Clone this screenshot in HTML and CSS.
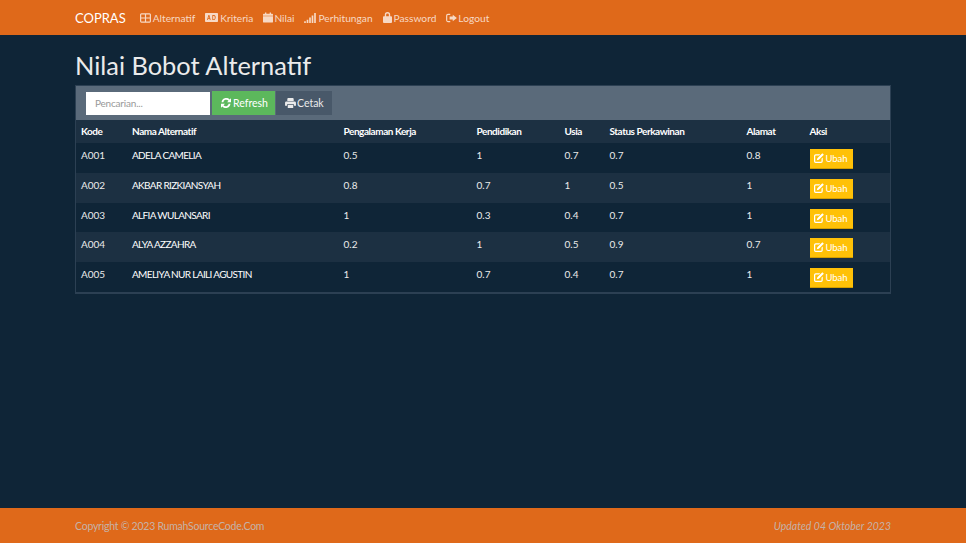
FILE: index.html
```html
<!DOCTYPE html>
<html lang="en">
<head>
    <meta charset="UTF-8">
    <title>Nilai Bobot Alternatif</title>
    <link rel="stylesheet" href="styles.css">
</head>
<body>
    <svg class="defs" width="0" height="0">
        <symbol id="i-table" viewBox="0 0 14 12"><path fill="none" stroke="currentColor" stroke-width="1.500" d="M1.800.8h10.400a1 1 0 0 1 1 1v8.400a1 1 0 0 1-1 1H1.800a1 1 0 0 1-1-1V1.800a1 1 0 0 1 1-1zM7 .8v10.400M.8 6h12.400"/></symbol>
        <symbol id="i-card" viewBox="0 0 16 11"><path fill="currentColor" fill-rule="evenodd" d="M1 0h14a1 1 0 0 1 1 1v9a1 1 0 0 1-1 1H1a1 1 0 0 1-1-1V1a1 1 0 0 1 1-1zm1.500 8.500h1l.4-1.200h1.700l.4 1.200h1L5.400 2.500H4.200zm1.700-2.100l.6-2 .6 2zM9 2.500v6h2.200c2.600 0 2.600-6 0-6zm1 1h1.100c1.300 0 1.300 4 0 4H10z"/></symbol>
        <symbol id="i-cal" viewBox="0 0 12 12"><path fill="currentColor" d="M2.400 0h1.600v1.500H8V0h1.600v1.500H11a1 1 0 0 1 1 1v1.300H0V2.500a1 1 0 0 1 1-1h1.400zM0 4.600h12V11a1 1 0 0 1-1 1H1a1 1 0 0 1-1-1z"/></symbol>
        <symbol id="i-signal" viewBox="0 0 14 12"><path fill="currentColor" d="M0 10h2v2H0zM3 8h2v4H3zM6 5.500h2V12H6zM9 3h2v9H9zM12 0h2v12h-2z"/></symbol>
        <symbol id="i-lock" viewBox="0 0 10 12"><path fill="currentColor" fill-rule="evenodd" d="M2 4.500V3a3 3 0 0 1 6 0v1.500h1a1 1 0 0 1 1 1V11a1 1 0 0 1-1 1H1a1 1 0 0 1-1-1V5.500a1 1 0 0 1 1-1zm1.500 0h3V3a1.500 1.500 0 0 0-3 0z"/></symbol>
        <symbol id="i-out" viewBox="0 0 13 12"><path fill="currentColor" d="M2.200 1H5v1.400H2.400a1 1 0 0 0-1 1v5.200a1 1 0 0 0 1 1H5V11H2.200A2.200 2.200 0 0 1 0 8.800V3.200A2.200 2.200 0 0 1 2.200 1zM8 2l5 4-5 4V7.700H4.200V4.300H8z"/></symbol>
        <symbol id="i-refresh" viewBox="0 0 12 12"><path fill="currentColor" d="M12 .3v4.800H7.200l1.800-1.800A3.500 3.500 0 0 0 2.800 5H.7A5.500 5.500 0 0 1 10.400 1.900zM0 11.700V6.900h4.800L3 8.700A3.500 3.500 0 0 0 9.200 7h2.100a5.500 5.500 0 0 1-9.700 3.100z"/></symbol>
        <symbol id="i-print" viewBox="0 0 12 11"><path fill="currentColor" fill-rule="evenodd" d="M3.200 0h5.600l.7.700V3.200h-7V.700zM1.500 3.800h9A1.500 1.500 0 0 1 12 5.300V8.500H9.800V7H2.200v1.500H0V5.300a1.500 1.500 0 0 1 1.500-1.500zM3 7.800h6V11H3z"/></symbol>
        <symbol id="i-edit" viewBox="0 0 12 12"><path fill="currentColor" d="M2 1.500h5.500L6 3H2.200a.7.7 0 0 0-.7.700v6.100c0 .4.300.7.700.7h6.100c.4 0 .7-.3.700-.7V7l1.500-1.500V10a2 2 0 0 1-2 2H2a2 2 0 0 1-2-2V3.500a2 2 0 0 1 2-2zM10 .2l1.800 1.800-6 6-2.500.7.700-2.500z"/></symbol>
    </svg>

    <nav class="navbar">
        <a class="brand">COPRAS</a>
        <ul class="nav">
            <li><svg class="icon ic-table"><use href="#i-table"/></svg>Alternatif</li>
            <li><svg class="icon ic-card"><use href="#i-card"/></svg>Kriteria</li>
            <li><svg class="icon ic-cal"><use href="#i-cal"/></svg>Nilai</li>
            <li><svg class="icon ic-signal"><use href="#i-signal"/></svg>Perhitungan</li>
            <li><svg class="icon ic-lock"><use href="#i-lock"/></svg>Password</li>
            <li><svg class="icon ic-out"><use href="#i-out"/></svg>Logout</li>
        </ul>
    </nav>

    <main class="container">
        <h1>Nilai Bobot Alternatif</h1>
        <div class="panel">
            <div class="panel-heading">
                <input class="search" type="text" placeholder="Pencarian...">
                <button class="btn btn-success"><svg class="icon ic-btn"><use href="#i-refresh"/></svg>Refresh</button>
                <button class="btn btn-default"><svg class="icon ic-print"><use href="#i-print"/></svg>Cetak</button>
            </div>
            <table class="table">
                <thead>
                    <tr>
                        <th class="col-kode">Kode</th>
                        <th class="col-nama">Nama Alternatif</th>
                        <th class="col-kerja">Pengalaman Kerja</th>
                        <th class="col-didik">Pendidikan</th>
                        <th class="col-usia">Usia</th>
                        <th class="col-status">Status Perkawinan</th>
                        <th class="col-alamat">Alamat</th>
                        <th>Aksi</th>
                    </tr>
                </thead>
                <tbody>
                    <tr>
                        <td>A001</td><td class="name">ADELA CAMELIA</td><td>0.5</td><td>1</td><td>0.7</td><td>0.7</td><td>0.8</td>
                        <td><a class="btn-ubah"><svg class="icon ic-edit"><use href="#i-edit"/></svg>Ubah</a></td>
                    </tr>
                    <tr>
                        <td>A002</td><td class="name">AKBAR RIZKIANSYAH</td><td>0.8</td><td>0.7</td><td>1</td><td>0.5</td><td>1</td>
                        <td><a class="btn-ubah"><svg class="icon ic-edit"><use href="#i-edit"/></svg>Ubah</a></td>
                    </tr>
                    <tr>
                        <td>A003</td><td class="name">ALFIA WULANSARI</td><td>1</td><td>0.3</td><td>0.4</td><td>0.7</td><td>1</td>
                        <td><a class="btn-ubah"><svg class="icon ic-edit"><use href="#i-edit"/></svg>Ubah</a></td>
                    </tr>
                    <tr>
                        <td>A004</td><td class="name">ALYA AZZAHRA</td><td>0.2</td><td>1</td><td>0.5</td><td>0.9</td><td>0.7</td>
                        <td><a class="btn-ubah"><svg class="icon ic-edit"><use href="#i-edit"/></svg>Ubah</a></td>
                    </tr>
                    <tr>
                        <td>A005</td><td class="name">AMELIYA NUR LAILI AGUSTIN</td><td>1</td><td>0.7</td><td>0.4</td><td>0.7</td><td>1</td>
                        <td><a class="btn-ubah"><svg class="icon ic-edit"><use href="#i-edit"/></svg>Ubah</a></td>
                    </tr>
                </tbody>
            </table>
        </div>
    </main>

    <footer class="footer">
        <span class="copyright">Copyright &copy; 2023 RumahSourceCode.Com</span>
        <em>Updated 04 Oktober 2023</em>
    </footer>
</body>
</html>
```

FILE: styles.css
```css
* {
    box-sizing: border-box;
}

body {
    margin: 0;
    display: flex;
    flex-direction: column;
    height: 543px;
    overflow: hidden;
    font-family: Lato, "Noto Sans", sans-serif;
    font-size: 10px;
    color: #ebebeb;
    background: #0f2537;
}

.defs {
    position: absolute;
}

.icon {
    display: inline-block;
    vertical-align: -1px;
    margin-right: 1px;
}

.ic-table { width: 11px; height: 10px; margin-right: 2px; }
.ic-card { width: 13px; height: 9px; margin-right: 2px; vertical-align: 0; }
.ic-cal { width: 10px; height: 11px; }
.ic-signal { width: 12px; height: 10px; margin-right: 2px; }
.ic-lock { width: 9px; height: 11px; margin-right: 2px; }
.ic-out { width: 11px; height: 10px; }
.ic-btn { width: 10px; height: 10px; margin-right: 2px; }
.ic-print { width: 11px; height: 10px; margin-right: 1px; vertical-align: -1px; }
.ic-edit { width: 10px; height: 10px; }

.navbar {
    display: flex;
    align-items: center;
    flex: none;
    height: 35px;
    padding-left: 75px;
    background: #df691a;
}

.brand {
    font-size: 13px;
    color: #fff;
    margin-right: 14px;
}

.nav {
    display: flex;
    gap: 10px;
    margin: 0;
    padding: 0;
    list-style: none;
    font-size: 10.2px;
    color: rgba(255, 255, 255, 0.75);
}

.container {
    flex: 1;
    padding: 0 75px;
}

h1 {
    margin: 16px 0 5px;
    font-size: 25.4px;
    font-weight: 400;
    line-height: 29px;
    color: #ebebeb;
}

.panel {
    border: 1px solid #2c4053;
    border-bottom-width: 2px;
    background: #0f2537;
}

.panel-heading {
    display: flex;
    align-items: center;
    gap: 2px;
    height: 34px;
    padding-left: 10px;
    background: #5a6a7a;
}

.search {
    width: 124px;
    height: 23px;
    padding: 0 9px;
    border: 0;
    font: 10px Lato, sans-serif;
    letter-spacing: -0.2px;
    background: #fff;
}

.search::placeholder {
    color: #999;
}

.btn {
    height: 24px;
    padding: 0 7px 0 9px;
    border: 0;
    font: 10.5px Lato, sans-serif;
    color: #fff;
}

.btn-success {
    background: #5cb85c;
}

.btn-default {
    margin-left: -1px;
    padding-right: 8px;
    background: #485869;
    color: #ebebeb;
}

.table {
    width: 100%;
    border-collapse: collapse;
    table-layout: fixed;
}

th {
    height: 23px;
    padding: 0 5px 2px;
    text-align: left;
    font-weight: 700;
    letter-spacing: -0.45px;
    color: #fff;
    background: #1c3042;
}

td {
    height: 29.8px;
    padding: 6px 5px 0;
    vertical-align: top;
    line-height: 12px;
}

td.name {
    letter-spacing: -0.65px;
    color: #fff;
}

tbody tr:nth-child(even) td {
    background: #1c3042;
}

.col-kode { width: 51px; }
.col-nama { width: 211.5px; }
.col-kerja { width: 133px; }
.col-didik { width: 88px; }
.col-usia { width: 45px; }
.col-status { width: 137px; }
.col-alamat { width: 63px; }

.btn-ubah {
    display: inline-block;
    height: 20px;
    width: 43px;
    line-height: 19px;
    text-align: center;
    font-size: 9.5px;
    color: #fff;
    background: #ffc107;
    border-bottom: 1px solid #d39e00;
}

.footer {
    display: flex;
    justify-content: space-between;
    align-items: center;
    flex: none;
    height: 35px;
    padding: 0 75px;
    font-size: 10.5px;
    color: rgba(190, 198, 206, 0.8);
    background: #df691a;
}

.copyright {
    letter-spacing: -0.24px;
}
```
